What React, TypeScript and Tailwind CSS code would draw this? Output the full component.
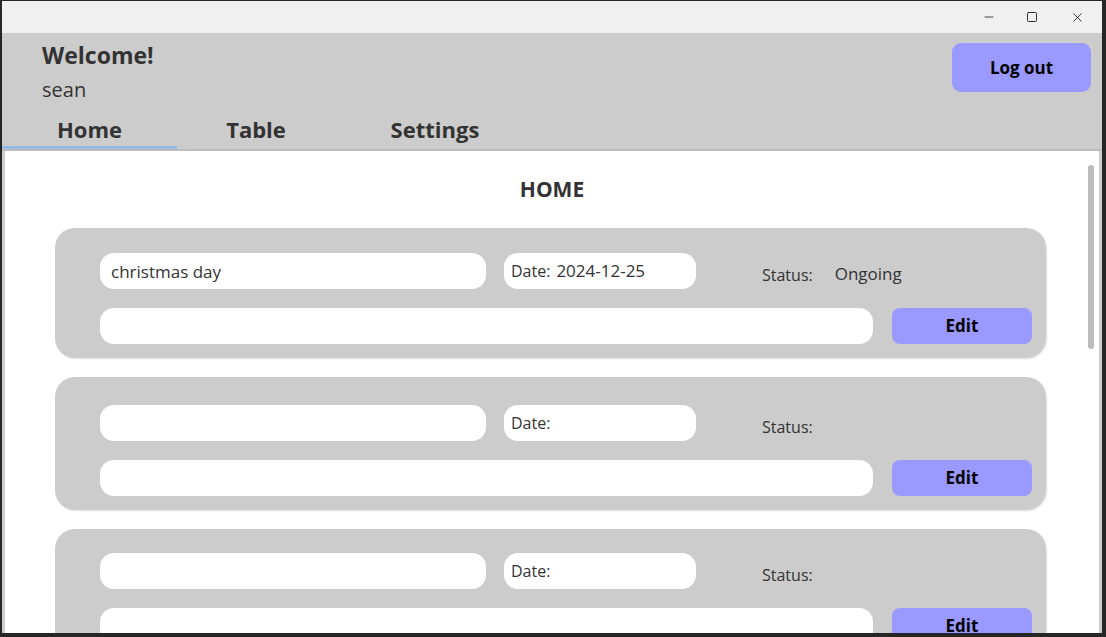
import { Minus, Square, X } from "lucide-react";

const tasks = [
  { title: "christmas day", date: "2024-12-25", status: "Ongoing", pad: "pt-[25px]" },
  { title: "", date: "", status: "", pad: "pt-[28px]" },
  { title: "", date: "", status: "", pad: "pt-[24px]" },
];

const tabs = [
  { label: "Home", width: "w-[175px]", active: true },
  { label: "Table", width: "w-[158px]", active: false },
  { label: "Settings", width: "w-[200px]", active: false },
];

function TaskCard({ title, date, status, pad }: { title: string; date: string; status: string; pad: string }) {
  return (
    <div className={`bg-[#cccccc] rounded-[20px] ${pad} pb-[14px] pl-[45px] pr-[14px] shadow-[1px_1px_2px_rgba(0,0,0,0.12)] shrink-0`}>
      <div className="flex items-center h-[36px]">
        <div className="w-[386px] h-[36px] bg-white rounded-[14px] flex items-center px-[11px] pt-[1px] text-[17px] text-[#333]">
          {title}
        </div>
        <div className="ml-[18px] w-[192px] h-[36px] bg-white rounded-[14px] flex items-center px-[7px] text-[16px] text-[#333]">
          <span>Date:</span>
          {date && <span className="ml-[6px] text-[17px]">{date}</span>}
        </div>
        <div className="ml-[66px] mt-[7px] flex items-center text-[16px] text-[#333]">
          <span>Status:</span>
          <span className="ml-[22px] text-[17px] -mt-[2px]">{status}</span>
        </div>
      </div>
      <div className="flex items-center mt-[19px]">
        <div className="w-[773px] h-[36px] bg-white rounded-[14px]" />
        <button className="ml-[19px] w-[140px] h-[36px] bg-[#9999ff] rounded-[8px] text-[17px] font-bold text-black">
          Edit
        </button>
      </div>
    </div>
  );
}

export default function App() {
  return (
    <div
      className="w-[1106px] h-[637px] bg-[#262626] pl-[2px] pt-[1px] pr-[4px] pb-[4px] overflow-hidden"
      style={{ fontFamily: '"Open Sans", "Noto Sans", sans-serif' }}
    >
      <div className="h-full flex flex-col bg-[#cccccc]">
        {/* title bar */}
        <div className="h-[32px] bg-[#f0f0f0] flex items-center justify-end shrink-0">
          <Minus className="w-[14px] h-[14px] text-black mr-[30px]" strokeWidth={1.2} />
          <Square className="w-[12px] h-[12px] text-black mr-[32px]" strokeWidth={1.6} />
          <X className="w-[15px] h-[15px] text-black mr-[17px]" strokeWidth={1.2} />
        </div>

        {/* header */}
        <div className="flex justify-between pl-[40px] pr-[11px] pt-[7px] shrink-0">
          <div className="flex flex-col text-[#333]">
            <span className="text-[23px] font-bold leading-[30px]">Welcome!</span>
            <span className="text-[20px] leading-[30px] mt-[5px]">sean</span>
          </div>
          <button className="w-[139px] h-[49px] mt-[3px] bg-[#9999ff] rounded-[9px] text-[17px] font-bold text-black">
            Log out
          </button>
        </div>

        {/* tabs */}
        <div className="flex mt-[9px] border-b-[2px] border-[#bdbdbd] shrink-0">
          {tabs.map((t) => (
            <div
              key={t.label}
              className={`${t.width} h-[35px] flex justify-center text-[22px] font-bold text-[#333] leading-[30px] border-b-[3px] ${
                t.active ? "border-[#94bbe6]" : "border-transparent"
              }`}
            >
              {t.label}
            </div>
          ))}
        </div>

        {/* content */}
        <div className="relative flex-1 mx-[3px] bg-white overflow-hidden">
          <div className="flex flex-col">
            <h1 className="text-center text-[21px] font-bold text-[#333] mt-[24px] mb-[25px] leading-[28px]">
              HOME
            </h1>
            <div className="flex flex-col gap-[19px] pl-[50px] pr-[53px]">
              {tasks.map((t, i) => (
                <TaskCard key={i} {...t} />
              ))}
            </div>
          </div>
          <div className="absolute right-[5px] top-[14px] w-[6px] h-[184px] rounded-full bg-[#bcbcbc]" />
        </div>
      </div>
    </div>
  );
}
